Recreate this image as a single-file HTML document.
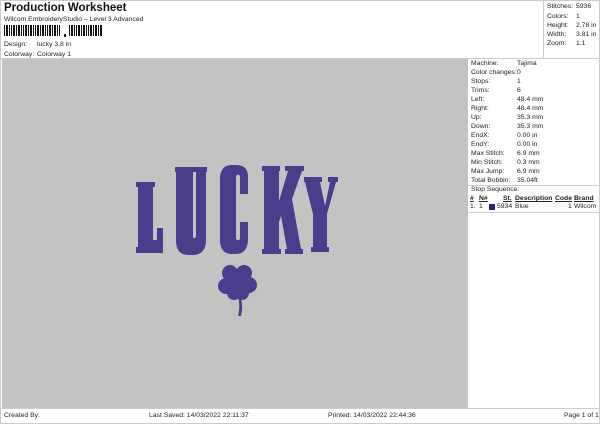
<!DOCTYPE html>
<html><head><style>
*{margin:0;padding:0;box-sizing:border-box}
body{width:600px;height:424px;background:#fff;position:relative;font-family:"Liberation Sans",sans-serif;color:#222;overflow:hidden}
.a{position:absolute;font-size:6.8px;white-space:nowrap}
</style></head><body>
<div style="position:absolute;left:0;top:0;width:600px;height:424px;border:1px solid #ccc"></div>
<div class="a" style="left:4px;top:2px;font-size:11.5px;font-weight:bold;color:#111">Production Worksheet</div>
<div class="a" style="left:4px;top:16px">Wilcom EmbroideryStudio – Level 3 Advanced</div>
<svg style="position:absolute;left:4px;top:25px" width="100" height="13">
<g fill="#111">
<rect x="0" y="0" width="1" height="11"/><rect x="2" y="0" width="2" height="11"/><rect x="5" y="0" width="1" height="11"/><rect x="7" y="0" width="1" height="11"/><rect x="9" y="0" width="2" height="11"/><rect x="12" y="0" width="1" height="11"/><rect x="14" y="0" width="2" height="11"/><rect x="17" y="0" width="1" height="11"/><rect x="19" y="0" width="1" height="11"/><rect x="21" y="0" width="2" height="11"/><rect x="24" y="0" width="1" height="11"/><rect x="26" y="0" width="2" height="11"/><rect x="29" y="0" width="1" height="11"/><rect x="31" y="0" width="1" height="11"/><rect x="33" y="0" width="2" height="11"/><rect x="36" y="0" width="1" height="11"/><rect x="38" y="0" width="2" height="11"/><rect x="41" y="0" width="1" height="11"/><rect x="43" y="0" width="1" height="11"/><rect x="45" y="0" width="2" height="11"/><rect x="48" y="0" width="1" height="11"/><rect x="50" y="0" width="2" height="11"/><rect x="53" y="0" width="1" height="11"/><rect x="55" y="0" width="1" height="11"/>
<rect x="60" y="9" width="2" height="3"/>
<rect x="65" y="0" width="1" height="11"/><rect x="67" y="0" width="2" height="11"/><rect x="70" y="0" width="1" height="11"/><rect x="72" y="0" width="1" height="11"/><rect x="74" y="0" width="2" height="11"/><rect x="77" y="0" width="1" height="11"/><rect x="79" y="0" width="2" height="11"/><rect x="82" y="0" width="1" height="11"/><rect x="84" y="0" width="1" height="11"/><rect x="86" y="0" width="2" height="11"/><rect x="89" y="0" width="1" height="11"/><rect x="91" y="0" width="2" height="11"/><rect x="94" y="0" width="1" height="11"/><rect x="96" y="0" width="2" height="11"/>
</g></svg>
<div class="a" style="left:4px;top:41px">Design:</div><div class="a" style="left:37px;top:41px">lucky 3,8 in</div>
<div class="a" style="left:4px;top:51px">Colorway:</div><div class="a" style="left:37px;top:51px">Colorway 1</div>
<div style="position:absolute;left:543px;top:0;width:57px;height:59px;border-left:1px solid #ccc"></div>
<div class="a" style="left:547px;top:3px">Stitches:</div><div class="a" style="left:576px;top:3px">5936</div>
<div class="a" style="left:547px;top:13px">Colors:</div><div class="a" style="left:576px;top:13px">1</div>
<div class="a" style="left:547px;top:22px">Height:</div><div class="a" style="left:576px;top:22px">2.78 in</div>
<div class="a" style="left:547px;top:31px">Width:</div><div class="a" style="left:576px;top:31px">3.81 in</div>
<div class="a" style="left:547px;top:40px">Zoom:</div><div class="a" style="left:576px;top:40px">1:1</div>
<div style="position:absolute;left:1px;top:58px;width:598px;height:1px;background:#ccc"></div>
<div style="position:absolute;left:2px;top:59px;width:466px;height:349px;background:#c3c3c3"></div>
<div style="position:absolute;left:1px;top:408px;width:598px;height:1px;background:#ccc"></div>
<div class="a" style="left:471px;top:59px;line-height:9px">Machine:<br>Color changes:<br>Stops:<br>Trims:<br>Left:<br>Right:<br>Up:<br>Down:<br>EndX:<br>EndY:<br>Max Stitch:<br>Min Stitch:<br>Max Jump:<br>Total Bobbin:</div>
<div class="a" style="left:517px;top:59px;line-height:9px">Tajima<br>0<br>1<br>6<br>48.4 mm<br>48.4 mm<br>35.3 mm<br>35.3 mm<br>0.00 in<br>0.00 in<br>6.9 mm<br>0.3 mm<br>6.9 mm<br>35.04ft</div>
<div style="position:absolute;left:468px;top:185px;width:131px;height:1px;background:#ccc"></div>
<div class="a" style="left:471px;top:186px">Stop Sequence:</div>
<div style="position:absolute;left:468px;top:212px;width:131px;height:1px;background:#ccc"></div>
<div class="a" style="left:470px;top:195px;font-weight:bold;text-decoration:underline">#</div>
<div class="a" style="left:479px;top:195px;font-weight:bold;text-decoration:underline">N#</div>
<div class="a" style="left:503px;top:195px;font-weight:bold;text-decoration:underline">St.</div>
<div class="a" style="left:515px;top:195px;font-weight:bold;text-decoration:underline">Description</div>
<div class="a" style="left:555px;top:195px;font-weight:bold;text-decoration:underline">Code</div>
<div class="a" style="left:574px;top:195px;font-weight:bold;text-decoration:underline">Brand</div>
<div class="a" style="left:470px;top:203px">1.</div><div class="a" style="left:479px;top:203px">1</div>
<div style="position:absolute;left:489px;top:204px;width:6px;height:6px;background:#25218a"></div>
<div class="a" style="left:497px;top:203px">5934</div><div class="a" style="left:515px;top:203px">Blue</div>
<div class="a" style="left:568px;top:203px">1</div><div class="a" style="left:574px;top:203px">Wilcom</div>
<svg style="position:absolute;left:0;top:0" width="600" height="424">
<g fill="#4b3c8c">
<path d="M136 182h19v5h-2v53h4v-12h6v25h-27v-6h2v-60h-2z"/>
<path d="M175 167h20v5h-2v64c0 3 3 3 3 0v-64h-2v-5h13v5h-1v68c0 10-5 15-13 15h-4c-9 0-13-5-13-15v-68h-1z"/>
<path d="M232 165h4c8 0 12 4 12 12v17h-8v-17c0-3-4-3-4 0v61c0 3 4 3 4 0v-16h8v17c0 9-4 15-12 15h-4c-8 0-12-5-12-14v-61c0-9 4-14 12-14z"/>
<path d="M262 166h18v5h-1v30l9-30h-3v-5h19v5h-2l-10 28 9 50h2v5h-18v-5h2l-6-33-2 6v27h2v5h-19v-5h2v-78h-2z"/>
<path d="M304 177h18v5h-2l5 24 5-24h-2v-5h10v5h-2l-9 32v33h2v5h-18v-5h2v-33l-8-32h-1z"/>
<g transform="translate(238 284)">
<circle cx="-8" cy="-11" r="8"/><circle cx="6" cy="-11" r="8"/><circle cx="-12" cy="2" r="8"/><circle cx="11" cy="1" r="8"/><circle cx="-4" cy="9" r="7"/><circle cx="4" cy="9" r="7"/><circle cx="0" cy="-2" r="8"/>
<path d="M-1 10q4 10 1 22l3 0q3-12-2-22z"/>
</g>
</g></svg>
<div class="a" style="left:4px;top:412px">Created By:</div>
<div class="a" style="left:149px;top:412px">Last Saved: 14/03/2022 22:11:37</div>
<div class="a" style="left:328px;top:412px">Printed: 14/03/2022 22:44:36</div>
<div class="a" style="left:564px;top:412px">Page 1 of 1</div>
</body></html>
